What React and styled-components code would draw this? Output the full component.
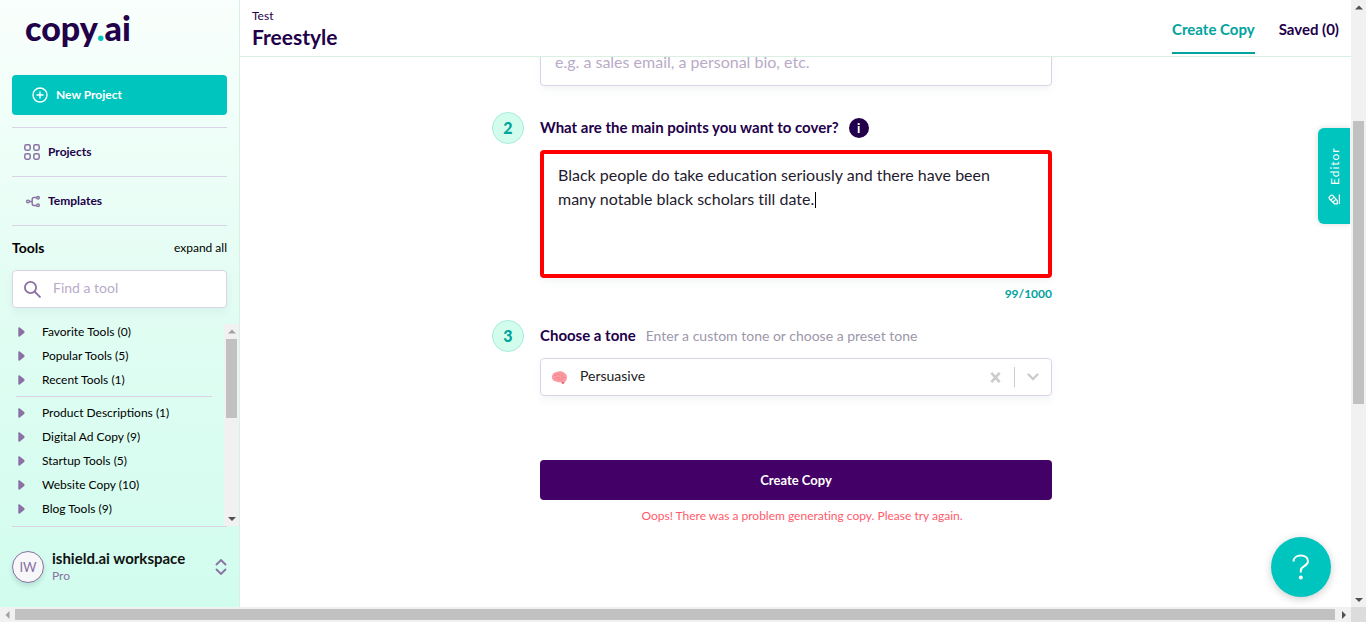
import React from "react";
import styled, { createGlobalStyle } from "styled-components";

const teal = "#00c4be";
const tealDark = "#00a39d";
const ink = "#22004a";
const mauve = "#8a70a3";
const line = "#dcd2e8";

const GlobalStyle = createGlobalStyle`
  *, *::before, *::after { box-sizing: border-box; }
  body { margin: 0; background: #fff; font-variant-ligatures: none; }
  body, button, input, textarea, select {
    font-family: Lato, "Liberation Sans", sans-serif;
  }
  textarea { font-variant-ligatures: none; }
  button { border: 0; background: none; padding: 0; cursor: pointer; }
  svg { flex: none; }
  h1, h2, p, ul { margin: 0; padding: 0; }
`;

const Frame = styled.div`
  display: grid;
  grid-template-columns: minmax(0, 1fr) 15px;
  grid-template-rows: minmax(0, 1fr) 15px;
  height: 100vh;
`;

const Page = styled.div`
  position: relative;
  display: flex;
  overflow: hidden;
`;

const ScrollTrack = styled.div`
  display: flex;
  flex-direction: ${(p) => (p.$horizontal ? "row" : "column")};
  align-items: center;
  background: #f1f1f1;
`;

const ScrollArrow = styled.svg`
  width: 15px;
  height: 15px;
  fill: ${(p) => (p.$dim ? "#a3a3a3" : "#505050")};
`;

const ScrollSpace = styled.div`
  flex: ${(p) => p.$grow} 1 0;
`;

const ScrollThumb = styled(ScrollSpace)`
  background: #c1c1c1;
  ${(p) => (p.$horizontal ? "height" : "width")}: 11px;
`;

const ScrollCorner = styled.div`
  background: #dcdcdc;
`;

const Sidebar = styled.aside`
  display: flex;
  flex-direction: column;
  flex: none;
  width: 240px;
  padding: 10px 0 0 12px;
  border-right: 1px solid #d9f0e3;
  background: linear-gradient(#f9fffc, #e2fdf3 50%, #d1fdee);
`;

const Logo = styled.a`
  padding-left: 13px;
  color: ${ink};
  font-size: 34px;
  font-weight: 900;
  line-height: 36px;
  text-decoration: none;

  span { color: ${teal}; }
`;

const Label = styled.span`
  padding-bottom: 2px;
`;

const NewProject = styled.button`
  display: flex;
  align-items: center;
  gap: 8px;
  flex: none;
  height: 40px;
  margin: 29px 12px 12px 0;
  padding-left: 20px;
  border-radius: 4px;
  background: ${teal};
  color: #fff;
  font-size: 12px;
  font-weight: 700;
`;

const NavLink = styled.a`
  display: flex;
  align-items: center;
  gap: 8px;
  flex: none;
  height: 49px;
  margin-right: 12px;
  padding-left: 12px;
  border-top: 1px solid ${line};
  color: ${ink};
  font-size: 12px;
  font-weight: 700;
  text-decoration: none;
`;

const ToolsHead = styled.div`
  display: flex;
  align-items: center;
  justify-content: space-between;
  flex: none;
  height: 45px;
  margin-right: 12px;
  padding-bottom: 2px;
  border-top: 1px solid ${line};

  h2 { font-size: 14px; font-weight: 700; }
  button { color: #000; font-size: 12px; }
`;

const Search = styled.label`
  display: flex;
  align-items: center;
  gap: 12px;
  flex: none;
  height: 38px;
  margin: 0 12px 16px 0;
  padding-left: 11px;
  border: 1px solid ${line};
  border-radius: 4px;
  background: #fff;
  box-shadow: 0 4px 8px rgba(0, 80, 80, 0.06);

  input {
    flex: 1;
    min-width: 0;
    padding: 0 0 3px;
    border: 0;
    outline: 0;
    background: none;
    font-size: 14px;
  }
  input::placeholder { color: #b9abc8; }
`;

const ToolArea = styled.div`
  display: flex;
  flex: 1 1 0;
  min-height: 0;
`;

const ToolList = styled.ul`
  flex: 1;
  padding-right: 12px;
  overflow: hidden;
  list-style: none;
`;

const ToolItem = styled.li`
  margin-left: ${(p) => (p.$divided ? 4 : 0)}px;
  ${(p) => p.$divided && `margin-top: 4px; padding-top: 4px; border-top: 1px solid ${line};`}

  button {
    display: flex;
    align-items: center;
    gap: 16px;
    height: 24px;
    padding-left: ${(p) => (p.$divided ? 2 : 6)}px;
    margin-top: -4px;
    margin-bottom: 4px;
    color: #000;
    font-size: 12px;
  }
  ${(p) => p.$divided && "button { margin-top: 0; }"}
`;

const Workspace = styled.button`
  display: flex;
  align-items: center;
  gap: 8px;
  flex: none;
  height: 81px;
  margin-right: 12px;
  border-top: 1px solid ${line};
  text-align: left;
`;

const Avatar = styled.span`
  display: grid;
  place-items: center;
  width: 32px;
  height: 32px;
  border: 1px solid ${mauve};
  border-radius: 50%;
  background: #f7f7f9;
  box-shadow: 0 3px 5px rgba(0, 60, 60, 0.15);
  color: ${mauve};
  font-size: 13px;
`;

const WorkspaceText = styled.span`
  display: flex;
  flex: 1;
  flex-direction: column;
  color: ${mauve};
  font-size: 12px;
  line-height: 18px;

  strong { color: #111; font-size: 15px; font-weight: 700; }
`;

const Main = styled.main`
  display: flex;
  flex: 1;
  flex-direction: column;
  min-width: 0;
`;

const Header = styled.header`
  display: flex;
  justify-content: space-between;
  flex: none;
  height: 57px;
  padding: 0 12px;
  border-bottom: 1px solid #d9f0e3;
  color: ${ink};
`;

const Title = styled.div`
  padding-top: 8px;

  p { font-size: 12px; line-height: 16px; }
  h1 { font-size: 21px; font-weight: 700; line-height: 26px; }
`;

const Tabs = styled.nav`
  display: flex;
  gap: 24px;
`;

const Tab = styled.a`
  height: 54px;
  padding-top: 20px;
  border-bottom: 2px solid ${(p) => (p.$active ? tealDark : "transparent")};
  color: ${(p) => (p.$active ? tealDark : ink)};
  font-size: 15px;
  font-weight: 700;
  line-height: 18px;
  text-decoration: none;
`;

const Scroll = styled.div`
  flex: 1;
  padding-left: 1px;
  overflow: hidden;
`;

const Form = styled.form`
  display: grid;
  grid-template-columns: 32px minmax(0, 512px) 32px;
  column-gap: 16px;
  justify-content: center;
  margin-top: -17px;

  > * { grid-column: 2; }
`;

const TextInput = styled.input`
  width: 100%;
  height: 46px;
  padding: 0 14px 4px;
  border: 1px solid ${line};
  border-radius: 4px;
  box-shadow: 0 4px 8px rgba(0, 80, 80, 0.05);
  font-size: 16px;

  &::placeholder { color: #b9abc8; }
`;

const StepNumber = styled.span`
  display: grid;
  place-items: center;
  grid-column: 1;
  width: 32px;
  height: 32px;
  margin-top: ${(p) => p.$top}px;
  padding-bottom: 2px;
  border: 1px solid #a9ebe0;
  border-radius: 50%;
  background: #d2fdec;
  color: ${tealDark};
  font-size: 16px;
  font-weight: 900;
`;

const StepHead = styled.div`
  display: flex;
  align-items: center;
  gap: 10px;
  height: 32px;
  margin: ${(p) => p.$top}px 0 6px;
  color: ${ink};
  font-size: 14px;

  label, span { padding-bottom: 2px; }
  label { font-size: 15px; font-weight: 700; }
  span { color: #9d97ab; }
`;

const InfoButton = styled.button`
  width: 20px;
  height: 20px;
  border-radius: 50%;
  background: ${ink};
  color: #fff;
  font-size: 13px;
  font-weight: 700;
  line-height: 20px;
`;

const PointsBox = styled.div`
  position: relative;
  height: 128px;
`;

const Points = styled.textarea`
  display: block;
  width: 100%;
  height: 100%;
  padding: 9px 24px 9px 14px;
  border: 4px solid #ff0000;
  border-radius: 4px;
  outline: 0;
  box-shadow: 0 4px 8px rgba(0, 80, 80, 0.05);
  color: #1f1b2e;
  font-size: 16px;
  line-height: 24px;
  resize: none;
`;

const Caret = styled.span`
  position: absolute;
  top: 42px;
  left: 275px;
  width: 1px;
  height: 16px;
  background: #000;
`;

const Counter = styled.p`
  margin-top: 8px;
  color: ${tealDark};
  font-size: 12px;
  font-weight: 700;
  line-height: 16px;
  text-align: right;
`;

const ToneBox = styled.div`
  display: flex;
  align-items: center;
  height: 38px;
  padding-left: 10px;
  border: 1px solid ${line};
  border-radius: 4px;
  box-shadow: 0 4px 8px rgba(0, 80, 80, 0.05);

  select {
    flex: 1;
    min-width: 0;
    padding: 0 12px 3px;
    border: 0;
    appearance: none;
    background: none;
    color: #222;
    font-size: 14px;
  }
`;

const ToneButton = styled.button`
  display: grid;
  place-items: center;
  width: 37px;
  height: 20px;
  border-left: ${(p) => (p.$ruled ? "1px solid #ccc" : "0")};
  color: #ccc;
`;

const Submit = styled.button`
  height: 40px;
  margin-top: 64px;
  border-radius: 4px;
  background: #430066;
  color: #fff;
  font-size: 13px;
  font-weight: 700;
`;

const ErrorText = styled.p`
  margin-top: 8px;
  padding-left: 12px;
  color: #ff5a6b;
  font-size: 12px;
  line-height: 16px;
  text-align: center;
`;

const EditorTab = styled.button`
  position: absolute;
  top: 128px;
  right: 1px;
  display: flex;
  align-items: center;
  justify-content: center;
  gap: 8px;
  width: 32px;
  height: 96px;
  border-radius: 0 6px 6px 0;
  background: ${teal};
  box-shadow: 0 0 6px rgba(0, 0, 0, 0.15);
  color: #fff;
  font-size: 12px;
  letter-spacing: 1px;
  writing-mode: vertical-rl;
  transform: rotate(180deg);
`;

const Help = styled.button`
  position: absolute;
  right: 20px;
  bottom: 10px;
  display: grid;
  place-items: center;
  width: 60px;
  height: 60px;
  border-radius: 50%;
  background: ${teal};
  box-shadow: 0 2px 8px rgba(0, 0, 0, 0.2);
`;

const arrows = {
  up: "M4 9.5h8L8 5.5z",
  down: "M4 6h8l-4 4z",
  left: "M9.500 4v8l-4-4z",
  right: "M6 4v8l4-4z",
};

function Scrollbar({ horizontal, before, thumb, after, dimStart }) {
  return (
    <ScrollTrack $horizontal={horizontal} aria-hidden="true">
      <ScrollArrow viewBox="0 0 15 15" $dim={dimStart}>
        <path d={horizontal ? arrows.left : arrows.up} />
      </ScrollArrow>
      <ScrollSpace $grow={before} />
      <ScrollThumb $grow={thumb} $horizontal={horizontal} />
      <ScrollSpace $grow={after} />
      <ScrollArrow viewBox="0 0 15 15">
        <path d={horizontal ? arrows.right : arrows.down} />
      </ScrollArrow>
    </ScrollTrack>
  );
}

const PlusIcon = () => (
  <svg width="16" height="16" viewBox="0 0 16 16" fill="none" stroke="#fff" strokeWidth="1.400">
    <circle cx="8" cy="8" r="7" />
    <path d="M8 4.500v7M4.500 8h7" />
  </svg>
);

const GridIcon = () => (
  <svg width="16" height="16" viewBox="0 0 16 16" fill="none" stroke={mauve} strokeWidth="1.500">
    <rect x=".8" y=".8" width="5.400" height="5.400" rx="1.600" />
    <rect x="9.800" y=".8" width="5.400" height="5.400" rx="1.600" />
    <rect x=".8" y="9.800" width="5.400" height="5.400" rx="1.600" />
    <rect x="9.800" y="9.800" width="5.400" height="5.400" rx="1.600" />
  </svg>
);

const BranchIcon = () => (
  <svg width="16" height="16" viewBox="0 0 16 16" fill="none" stroke={mauve} strokeWidth="1.400">
    <circle cx="4" cy="8.500" r="1.400" />
    <circle cx="14" cy="4.800" r="1.300" />
    <circle cx="14" cy="12.200" r="1.300" />
    <path d="M5.400 8.500h2.800M12.600 4.500H10a1.800 1.800 0 0 0-1.800 1.800v4.400a1.800 1.800 0 0 0 1.800 1.800h2.600" />
  </svg>
);

const SearchIcon = () => (
  <svg width="17" height="17" viewBox="0 0 17 17" fill="none" stroke={mauve} strokeWidth="1.800">
    <circle cx="6.500" cy="6.500" r="5.600" />
    <path d="M10.500 10.500l6 6" />
  </svg>
);

const TriangleIcon = () => (
  <svg width="8" height="10" viewBox="0 0 8 10" fill={mauve}>
    <path d="M.3 1.200Q.3 0 1.500.3L6.200 4Q7 5 6.200 6L1.500 9.700Q.3 10 .3 8.800z" />
  </svg>
);

const SelectorIcon = () => (
  <svg width="12" height="16" viewBox="0 0 12 16" fill="none" stroke={mauve} strokeWidth="1.800" strokeLinecap="round">
    <path d="M1.500 5.500L6 1l4.500 4.500M1.500 10.500L6 15l4.500-4.500" />
  </svg>
);

const BrainIcon = () => (
  <svg width="17" height="15" viewBox="0 0 17 15">
    <path fill="#fb9ba1" d="M1 7.500C.8 4.500 3 2.200 5.500 2 8.500.8 11.500 1.200 13.200 2.800c2 1 3.200 3.200 2.600 5.200 0 2-1 3.400-2.300 4l-.5 1.500-1.800.3-1-1.600c-2 .4-3.700 0-4.700-.8C3 11.400 1 10 1 7.500z" />
    <path fill="#e2606f" d="M10.200 12.200l3.300-.2-.5 1.500-1.800.3z" />
    <path fill="none" stroke="#ee7a85" strokeWidth=".7" d="M3 5.500c1.500-.8 2.500.2 3.500-.8M6.500 3c.2 1.500 2 1.200 2.500 2.500M11 3c-.8 1.500.8 2 0 3.500M3.500 8.500c2 .3 3-1.500 5-.7M10 7.500c1.500 1 3-.5 4.500.3M7 10c1.500-1 3 .3 4.500-.2" />
  </svg>
);

const CrossIcon = () => (
  <svg width="11" height="11" viewBox="0 0 11 11" stroke="currentColor" strokeWidth="2.600">
    <path d="M1.300.8l8.400 9.400M9.700.8l-8.400 9.400" />
  </svg>
);

const ChevronIcon = () => (
  <svg width="12" height="8" viewBox="0 0 12 8" fill="none" stroke="currentColor" strokeWidth="2.400" strokeLinecap="round">
    <path d="M1.500 1.500L6 6l4.500-4.500" />
  </svg>
);

const PenIcon = () => (
  <svg width="12" height="12" viewBox="0 0 12 12" fill="none" stroke="#fff" strokeWidth="1.200">
    <g transform="rotate(90 6 6)">
      <path d="M1 11.400h9.500" />
      <path d="M1.200 9.300V6.500L6 1.600q1.200-1 2.400 0l1 1q1 1.200 0 2.400L4.300 9.300zM4.800 2.900l3.300 3.300M2.800 5l3.300 3.300" />
    </g>
  </svg>
);

const QuestionIcon = () => (
  <svg width="18" height="26" viewBox="0 0 18 26" fill="none" stroke="#fff" strokeWidth="2">
    <path d="M1.500 7.500C1.500 4 4.500 1.500 8.800 1.500s7.200 2.300 7.200 5.700c0 5-7.200 4.800-7.200 9.300v2" />
    <circle cx="8.800" cy="23.500" r="2" fill="#fff" stroke="none" />
  </svg>
);

const tools = [
  ["Favorite Tools (0)"],
  ["Popular Tools (5)"],
  ["Recent Tools (1)"],
  ["Product Descriptions (1)", true],
  ["Digital Ad Copy (9)"],
  ["Startup Tools (5)"],
  ["Website Copy (10)"],
  ["Blog Tools (9)"],
];

export default function App() {
  return (
    <>
      <GlobalStyle />
      <Frame>
        <Page>
          <Sidebar>
            <Logo href="#home">copy<span>.</span>ai</Logo>
            <NewProject type="button"><PlusIcon /><Label>New Project</Label></NewProject>
            <NavLink href="#projects"><GridIcon /><Label>Projects</Label></NavLink>
            <NavLink href="#templates"><BranchIcon /><Label>Templates</Label></NavLink>
            <ToolsHead>
              <h2>Tools</h2>
              <button type="button">expand all</button>
            </ToolsHead>
            <Search>
              <SearchIcon />
              <input type="text" placeholder="Find a tool" aria-label="Find a tool" />
            </Search>
            <ToolArea>
              <ToolList>
                {tools.map(([name, divided]) => (
                  <ToolItem key={name} $divided={divided}>
                    <button type="button"><TriangleIcon /><Label>{name}</Label></button>
                  </ToolItem>
                ))}
              </ToolList>
              <Scrollbar before={0} thumb={79} after={93} dimStart />
            </ToolArea>
            <Workspace type="button">
              <Avatar>IW</Avatar>
              <WorkspaceText><strong>ishield.ai workspace</strong>Pro</WorkspaceText>
              <SelectorIcon />
            </Workspace>
          </Sidebar>
          <Main>
            <Header>
              <Title>
                <p>Test</p>
                <h1>Freestyle</h1>
              </Title>
              <Tabs>
                <Tab href="#create" $active>Create Copy</Tab>
                <Tab href="#saved">Saved (0)</Tab>
              </Tabs>
            </Header>
            <Scroll>
              <Form>
                <TextInput type="text" aria-label="What are you looking to create?" placeholder="e.g. a sales email, a personal bio, etc." />
                <StepNumber $top={26}>2</StepNumber>
                <StepHead $top={26}>
                  <label htmlFor="points">What are the main points you want to cover?</label>
                  <InfoButton type="button" aria-label="More information">i</InfoButton>
                </StepHead>
                <PointsBox>
                  <Points
                    id="points"
                    spellCheck="false"
                    defaultValue="Black people do take education seriously and there have been many notable black scholars till date."
                  />
                  <Caret />
                </PointsBox>
                <Counter>99/1000</Counter>
                <StepNumber $top={18}>3</StepNumber>
                <StepHead $top={18}>
                  <label htmlFor="tone">Choose a tone</label>
                  <span>Enter a custom tone or choose a preset tone</span>
                </StepHead>
                <ToneBox>
                  <BrainIcon />
                  <select id="tone" defaultValue="Persuasive">
                    <option>Persuasive</option>
                  </select>
                  <ToneButton type="button" aria-label="Clear tone"><CrossIcon /></ToneButton>
                  <ToneButton type="button" aria-label="Show tones" $ruled><ChevronIcon /></ToneButton>
                </ToneBox>
                <Submit type="button">Create Copy</Submit>
                <ErrorText role="alert">Oops! There was a problem generating copy. Please try again.</ErrorText>
              </Form>
            </Scroll>
          </Main>
          <EditorTab type="button"><PenIcon />Editor</EditorTab>
          <Help type="button" aria-label="Help"><QuestionIcon /></Help>
        </Page>
        <Scrollbar before={106} thumb={283} after={188} />
        <Scrollbar horizontal before={0} thumb={1320} after={1} dimStart />
        <ScrollCorner />
      </Frame>
    </>
  );
}
